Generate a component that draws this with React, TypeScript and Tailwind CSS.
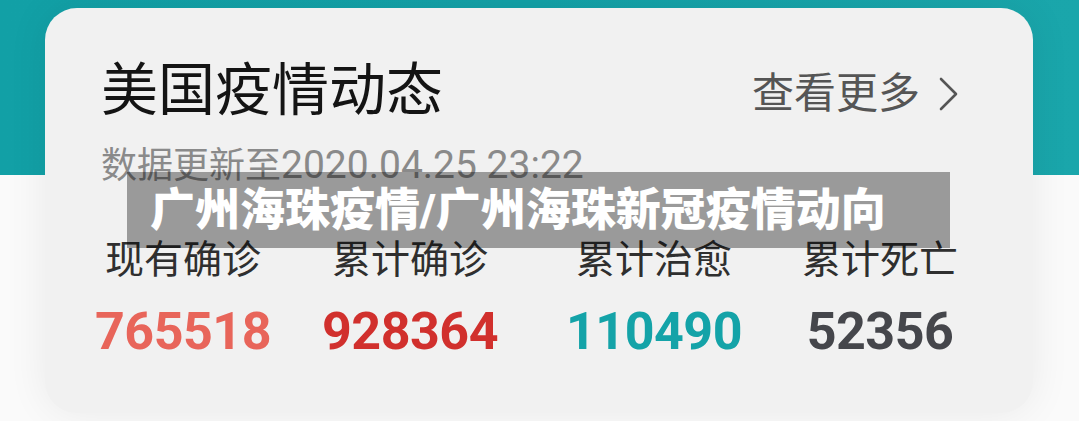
import React from 'react';

const cjk = { fontFamily: 'Roboto, "Noto Sans CJK SC", sans-serif' };

const stats = [
  { label: '现有确诊', value: '765518', color: 'text-[#e8655a]', ml: 'ml-[2px]' },
  { label: '累计确诊', value: '928364', color: 'text-[#d1302d]', ml: 'ml-[67px]' },
  { label: '累计治愈', value: '110490', color: 'text-[#14a3a8]', ml: 'ml-[84px]' },
  { label: '累计死亡', value: '52356', color: 'text-[#45464b]', ml: 'ml-[68px]' },
];

export default function App() {
  return (
    <div className="relative w-[1079px] h-[421px] overflow-hidden bg-[#fafafa]" style={cjk}>
      {/* teal header backdrop */}
      <div className="absolute top-0 left-0 w-full h-[175px] bg-gradient-to-r from-[#12a0a6] via-[#13a1a7] to-[#1aa6ab]" />

      <div className="relative ml-[45px] mt-[8px] w-[988px] h-[405px] rounded-[32px] bg-[#f1f1f1] shadow-[0_0_40px_rgba(0,0,0,0.07)] pl-[56px] pr-[75px] pt-[54px] flex flex-col">
        <div className="flex items-start justify-between">
          <h1 className="text-[57px] leading-none text-[#141414] font-normal">美国疫情动态</h1>
          <div className="mt-[11px] flex items-center gap-[19px] text-[#555555]">
            <span className="text-[42px] leading-none">查看更多</span>
            <svg width="19" height="34" viewBox="0 0 19 34" fill="none">
              <path d="M2 2 L17 17 L2 32" stroke="#555555" strokeWidth="2.6" strokeLinecap="round" strokeLinejoin="round" />
            </svg>
          </div>
        </div>

        <div className="mt-[27px] h-[37px] leading-none text-[#8a8a8a] whitespace-nowrap">
          <span className="text-[36px]">数据更新至</span>
          <span className="text-[39px]">2020.04.25 23:22</span>
        </div>

        <div className="mt-[58px] flex">
          {stats.map((s) => (
            <div key={s.label} className={`w-[160px] flex flex-col items-center ${s.ml}`}>
              <div className="text-[39px] leading-none text-[#2f2f2f] whitespace-nowrap">{s.label}</div>
              <div className={`mt-[26px] text-[52px] leading-none font-bold tracking-[-0.5px] ${s.color}`}>{s.value}</div>
            </div>
          ))}
        </div>
      </div>

      {/* title banner overlay */}
      <div className="absolute left-[127px] top-[172px] w-[823px] h-[76px] bg-black/[0.36] flex items-center pl-[23px]">
        <span className="text-white text-[45px] leading-none font-black whitespace-nowrap">
          广州海珠疫情/广州海珠新冠疫情动向
        </span>
      </div>
    </div>
  );
}
